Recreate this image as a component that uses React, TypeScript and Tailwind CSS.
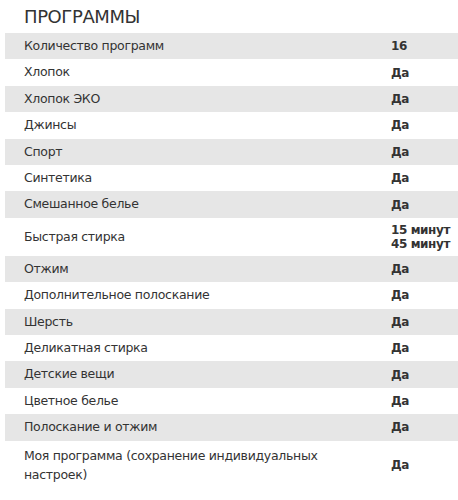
const rows: { label: string; value: string[] }[] = [
  { label: 'Количество программ', value: ['16'] },
  { label: 'Хлопок', value: ['Да'] },
  { label: 'Хлопок ЭКО', value: ['Да'] },
  { label: 'Джинсы', value: ['Да'] },
  { label: 'Спорт', value: ['Да'] },
  { label: 'Синтетика', value: ['Да'] },
  { label: 'Смешанное белье', value: ['Да'] },
  { label: 'Быстрая стирка', value: ['15 минут', '45 минут'] },
  { label: 'Отжим', value: ['Да'] },
  { label: 'Дополнительное полоскание', value: ['Да'] },
  { label: 'Шерсть', value: ['Да'] },
  { label: 'Деликатная стирка', value: ['Да'] },
  { label: 'Детские вещи', value: ['Да'] },
  { label: 'Цветное белье', value: ['Да'] },
  { label: 'Полоскание и отжим', value: ['Да'] },
  { label: 'Моя программа (сохранение индивидуальных настроек)', value: ['Да'] },
];

export default function App() {
  return (
    <div className="w-[458px] h-[500px] bg-white text-[#333] font-['DejaVu_Sans',sans-serif] pl-[5px] pt-[6px]">
      <h2 className="pl-[19px] text-[18px] leading-[22px] font-normal tracking-[-0.4px] mb-[5px]">ПРОГРАММЫ</h2>
      <div className="flex flex-col">
        {rows.map((r, i) => (
          <div
            key={r.label}
            className={`grid grid-cols-[386px_1fr] items-center py-[5px] ${i % 2 === 0 ? 'bg-[#e6e6e6]' : 'bg-white'}`}
          >
            {/* long labels wrap onto two looser lines */}
            <div
              className={`pl-[19px] pr-[40px] text-[12.5px] tracking-[-0.3px] ${
                r.label.length > 40 ? 'leading-[19px]' : 'leading-[16.4px]'
              }`}
            >
              {r.label}
            </div>
            <div className="text-[12px] font-bold leading-[14px] tracking-[-0.4px]">
              {r.value.map((v) => (
                <div key={v}>{v}</div>
              ))}
            </div>
          </div>
        ))}
      </div>
    </div>
  );
}
